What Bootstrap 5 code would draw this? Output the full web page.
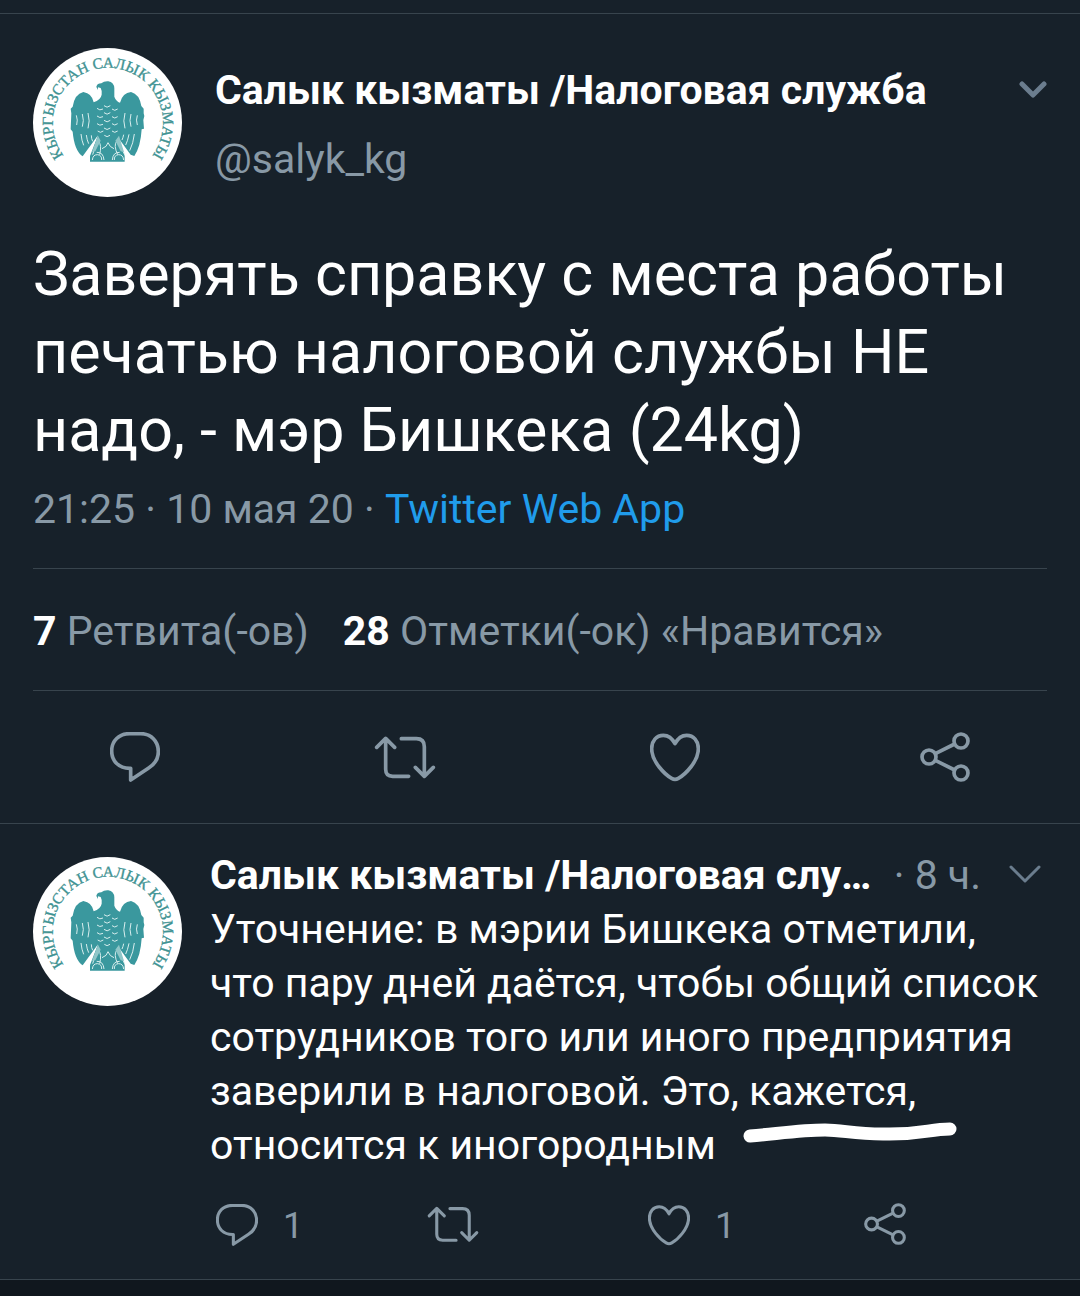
<!DOCTYPE html>
<html lang="ru">
<head>
<meta charset="utf-8">
<meta name="viewport" content="width=device-width, initial-scale=1">
<title>Салык кызматы /Налоговая служба</title>
<link href="https://cdn.jsdelivr.net/npm/bootstrap@5.3.0/dist/css/bootstrap.min.css" rel="stylesheet">
<style>
  body { background: #10171e; color: #fff; font-family: Roboto, "Noto Sans", sans-serif; font-size: 41px; line-height: 54px; }
  .feed { background: #17212a; padding-top: 13px; border-bottom: 1px solid #38444d; }
  .tweet { border-top: 1px solid #38444d; }
  .gutter { padding-left: 33px; padding-right: 33px; }
  .tweet-head { padding-top: 34px; gap: 33px; }
  .avatar { width: 149px; height: 149px; flex: none; }
  .head-names { padding-top: 15px; }
  .muted { color: #8899a6; }
  .handle { margin-top: 15px; }
  .chev { color: #6b7d8e; display: flex; }
  .chev-main { margin-top: 31px; }
  .tweet-text { font-size: 61px; line-height: 78px; margin: 38px 0 0; }
  .meta { padding: 13px 0 32px; }
  .meta a { color: #209ceb; }
  .stats { border-top: 1px solid #38444d; border-bottom: 1px solid #38444d; padding: 35px 0 32px; gap: 34px; }
  .act { color: #8899a6; font-size: 36px; line-height: 42px; display: flex; align-items: center; }
  .act svg { overflow: visible; display: block; }
  .act span { padding-top: 2px; }
  .main-acts { padding: 41px 0; }
  .reply { padding-top: 24px; }
  .reply-row { padding-left: 33px; padding-right: 33px; gap: 28px; }
  .reply-row .avatar { margin-top: 9px; }
  .reply-body { min-width: 0; }
  .time { padding-left: 16px; padding-right: 28px; }
  .chev-reply { margin-right: 6px; }
  .reply-acts { padding: 31px 0 32px 216px; }
  .reply-acts .act { gap: 25px; }
  .scribble { left: -6px; top: 55px; }
</style>
</head>
<body>
<svg width="0" height="0" class="position-absolute" aria-hidden="true">
  <symbol id="i-reply" viewBox="0 0 150 150"><path d="M59 5H92C123 5 145 27 145 59C145 82 135 96 116 108L62 144V109H59C27 109 5 88 5 57S27 5 59 5Z" fill="none" stroke="currentColor" stroke-width="11" stroke-linejoin="round"/></symbol>
  <symbol id="i-retweet" viewBox="0 0 150 150" overflow="visible"><path d="M-10 46L17 19L44 46M17 22V112Q17 133 38 133H86M64 20H109Q133 20 133 44V130M106 106L133 133L160 106" fill="none" stroke="currentColor" stroke-width="11" stroke-linecap="round" stroke-linejoin="round"/></symbol>
  <symbol id="i-like" viewBox="0 0 150 150"><path d="M75 35C66 18 55 10 40 10C19 10 5 27 5 50C5 89 45 128 65 139Q75 145 85 139C105 128 145 89 145 50C145 27 131 10 110 10C95 10 84 18 75 35Z" fill="none" stroke="currentColor" stroke-width="11" stroke-linejoin="round"/></symbol>
  <symbol id="i-share" viewBox="0 0 150 150"><g fill="none" stroke="currentColor" stroke-width="11"><circle cx="27" cy="75" r="21"/><circle cx="123" cy="27" r="21"/><circle cx="123" cy="123" r="21"/><path d="M46 65L104 36M46 85L104 114"/></g></symbol>
  <symbol id="logo" viewBox="39 144 447 447">
    <circle cx="262.5" cy="367.5" r="223.5" fill="#fff"/>
    <path id="ring" d="M263.5 533.5A165 165 0 1 1 263.6 533.5" fill="none"/>
    <text font-family="Liberation Serif, serif" font-size="46" fill="#3f9393" stroke="#3f9393" stroke-width="1" text-anchor="middle"><textPath href="#ring" startOffset="50%">КЫРГЫЗСТАН САЛЫК КЫЗМАТЫ</textPath></text>
    <path fill="#3a989e" d="M229 260Q232 250 244 250Q252 243 265 244Q282 247 283 265V290Q288 304 300 308Q308 278 333 276Q358 282 364 318L371 326V340L373 348L370 360L372 386L365 388Q362 440 343 468L332 464L298 418L314 468V485H210V468L234 406L188 469Q163 452 158 395L152 388L154 340L152 326L158 320Q164 282 190 276Q216 280 221 307Q242 300 245 284Q246 270 242 264L234 262L233 270Z"/>
    <g fill="none" stroke="#d9eeee" stroke-width="3">
      <path d="M231 325q8 8 18 2M252 317q9 9 19 0M276 327q8 8 17 0M231 348q8 8 18 2M252 338q9 9 19 0M276 350q8 8 17 0M231 371q8 8 18 2M252 361q9 9 19 0M276 371q8 8 17 0M233 393q8 8 17 0M252 384q9 9 19 0M276 393q8 8 17 0M253 406q8 8 17 0"/>
      <path d="M169 346q5 14 1 29M187 342q6 20 0 38M204 339q7 24 0 46M352 346q-5 14 0 29M333 342q-6 20 0 38M315 339q-7 24 0 46M183 402q2 20 8 34M199 405q2 16 7 26M214 406q0 10 4 18M343 402q-3 28-14 50M327 403q-4 20-10 32M311 404q-2 10-5 16"/>
      <path d="M246 446q15-5 18-18q5 14 18 18M234 414q-8 22-16 50M294 414q8 28 20 50M236 424q10 12 3 40M290 424q-10 12 3 40M217 480q2-17 16-16q13 2 12 16M252 480q-2-24-22-23M311 480q-2-17-16-16q-13 2-12 16M277 480q2-24 22-23"/>
    </g>
    <path fill="#8fc6c8" d="M234 407L216 456L226 454L242 422ZM297 407L312 456L302 454L286 422Z"/>
  </symbol>
</svg>

<main class="feed">
  <article class="tweet">
    <div class="gutter">
      <header class="tweet-head d-flex align-items-start">
        <svg class="avatar" role="img" aria-label="Салык кызматы"><use href="#logo"/></svg>
        <div class="head-names flex-grow-1">
          <div class="fw-bold">Салык кызматы /Налоговая служба</div>
          <div class="handle muted">@salyk_kg</div>
        </div>
        <button type="button" class="btn p-0 border-0 chev chev-main" aria-label="Меню"><svg width="28" height="22" viewBox="0 0 28 22"><path d="M3 5L14 16L25 5" fill="none" stroke="currentColor" stroke-width="5" stroke-linecap="round" stroke-linejoin="round"/></svg></button>
      </header>
      <p class="tweet-text">Заверять справку с места работы печатью налоговой службы НЕ надо, - мэр Бишкека (24kg)</p>
      <div class="meta muted">21:25 · 10 мая 20 · <a href="#" class="text-decoration-none">Twitter Web App</a></div>
      <div class="stats muted d-flex">
        <span><strong class="text-white">7</strong> Ретвита(-ов)</span>
        <span><strong class="text-white">28</strong> Отметки(-ок) «Нравится»</span>
      </div>
    </div>
    <div class="row g-0 main-acts">
      <div class="col d-flex justify-content-center"><button type="button" class="btn p-0 border-0 act" aria-label="Ответить"><svg width="50" height="50"><use href="#i-reply"/></svg></button></div>
      <div class="col d-flex justify-content-center"><button type="button" class="btn p-0 border-0 act" aria-label="Ретвитнуть"><svg width="50" height="50"><use href="#i-retweet"/></svg></button></div>
      <div class="col d-flex justify-content-center"><button type="button" class="btn p-0 border-0 act" aria-label="Нравится"><svg width="50" height="50"><use href="#i-like"/></svg></button></div>
      <div class="col d-flex justify-content-center"><button type="button" class="btn p-0 border-0 act" aria-label="Поделиться"><svg width="50" height="50"><use href="#i-share"/></svg></button></div>
    </div>
  </article>

  <article class="tweet reply">
    <div class="reply-row d-flex align-items-start">
      <svg class="avatar" role="img" aria-label="Салык кызматы"><use href="#logo"/></svg>
      <div class="reply-body flex-grow-1">
        <div class="d-flex align-items-center">
          <div class="fw-bold text-truncate flex-grow-1">Салык кызматы /Налоговая служба</div>
          <div class="time muted text-nowrap">· 8 ч.</div>
          <button type="button" class="btn p-0 border-0 chev chev-reply" aria-label="Меню"><svg width="32" height="22" viewBox="0 0 32 22"><path d="M2 3L16 17L30 3" fill="none" stroke="currentColor" stroke-width="3" stroke-linecap="round" stroke-linejoin="round"/></svg></button>
        </div>
        <p class="m-0">Уточнение: в мэрии Бишкека отметили, что пару дней даётся, чтобы общий список сотрудников того или иного предприятия заверили в налоговой. Это, <span class="position-relative">кажется,<svg class="scribble position-absolute" width="214" height="22" viewBox="0 0 214 22" aria-hidden="true"><path d="M7 14C40 11 60 8 82 8C100 8 110 12 140 12C178 13 186 7 207 7" fill="none" stroke="#fff" stroke-width="13" stroke-linecap="round"/></svg></span> относится к иногородным</p>
      </div>
    </div>
    <div class="row g-0 reply-acts">
      <div class="col"><button type="button" class="btn p-0 border-0 act" aria-label="Ответить: 1"><svg width="42" height="42"><use href="#i-reply"/></svg><span>1</span></button></div>
      <div class="col"><button type="button" class="btn p-0 border-0 act" aria-label="Ретвитнуть"><svg width="42" height="42"><use href="#i-retweet"/></svg></button></div>
      <div class="col"><button type="button" class="btn p-0 border-0 act" aria-label="Нравится: 1"><svg width="42" height="42"><use href="#i-like"/></svg><span>1</span></button></div>
      <div class="col"><button type="button" class="btn p-0 border-0 act" aria-label="Поделиться"><svg width="42" height="42"><use href="#i-share"/></svg></button></div>
    </div>
  </article>
</main>
<script src="https://cdn.jsdelivr.net/npm/bootstrap@5.3.0/dist/js/bootstrap.bundle.min.js"></script>
</body>
</html>
